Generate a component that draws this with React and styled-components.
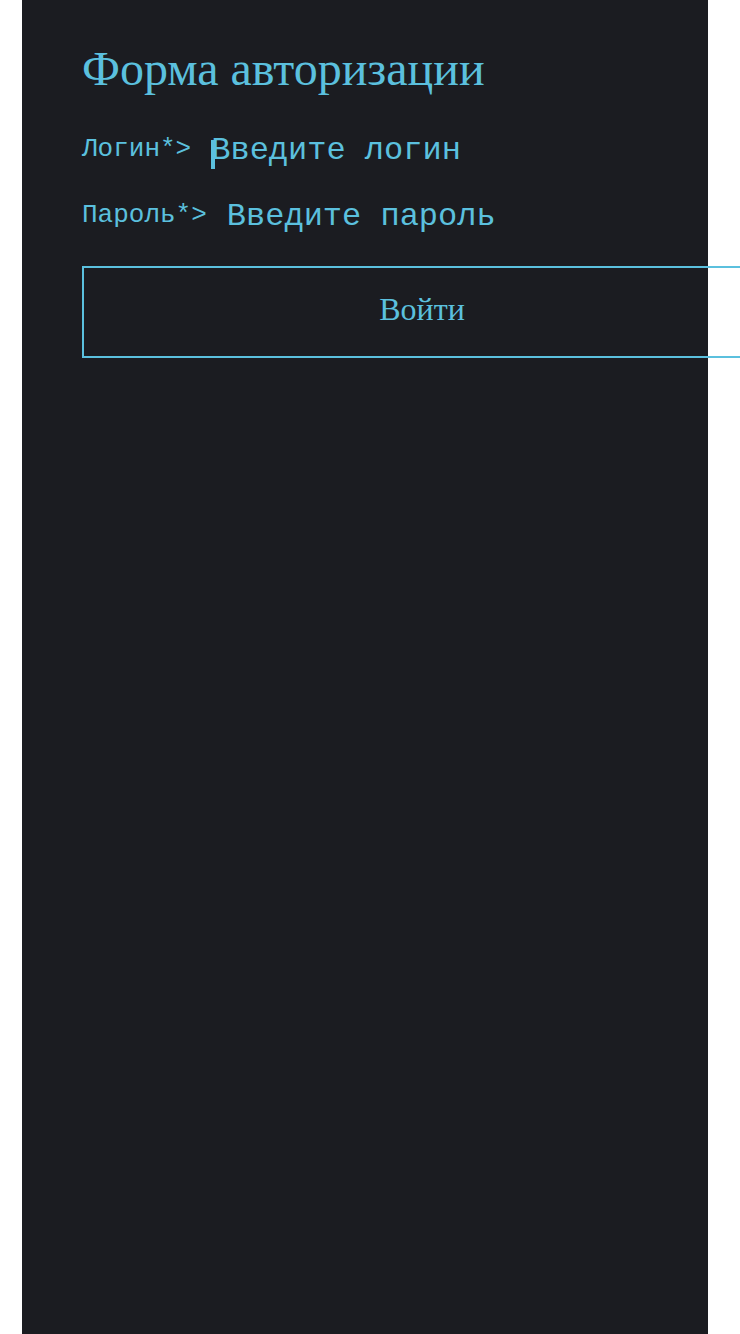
import React from "react";
import styled, { createGlobalStyle } from "styled-components";

const GlobalStyle = createGlobalStyle`
  html, body {
    margin: 0;
    padding: 0;
    background: #ffffff;
    overflow-x: hidden;
  }
  body {
    font-family: "Liberation Serif", serif;
  }
  * { box-sizing: border-box; }
`;

const ACCENT = "#5bc0de";

const Panel = styled.main`
  margin-left: 22px;
  width: 686px;
  min-height: 1334px;
  background: #1b1c21;
  padding: 41px 0 0 60px;
`;

const Title = styled.h1`
  margin: 0 0 37px 0;
  font-family: "Liberation Serif", "Times New Roman", serif;
  font-weight: 400;
  font-size: 48px;
  line-height: 55px;
  color: ${ACCENT};
`;

const Form = styled.form`
  display: flex;
  flex-direction: column;
  gap: 30px;
`;

const Row = styled.div`
  display: flex;
  align-items: flex-start;
`;

const Label = styled.label`
  font-family: "Liberation Mono", "Courier New", monospace;
  font-size: 26px;
  line-height: 29px;
  padding-top: 2px;
  margin-right: 20px;
  color: ${ACCENT};
  white-space: nowrap;
`;

const Field = styled.div`
  position: relative;
  flex: 1;
  display: flex;

  ${({ $focused }) =>
    $focused &&
    `
    &::before {
      content: "";
      position: absolute;
      left: 0;
      top: 7px;
      width: 4px;
      height: 29px;
      background: ${ACCENT};
    }
  `}
`;

const Input = styled.input`
  flex: 1;
  min-width: 0;
  height: 36px;
  padding: 0;
  margin: 0;
  border: none;
  outline: none;
  background: transparent;
  font-family: "Liberation Mono", "Courier New", monospace;
  font-size: 32px;
  line-height: 36px;
  color: ${ACCENT};
  caret-color: transparent;

  &::placeholder {
    color: ${ACCENT};
    opacity: 1;
  }
`;

const Submit = styled.button`
  width: 680px;
  height: 92px;
  margin: 1px 0 0 0;
  padding: 0 0 6px 0;
  border: 2px solid ${ACCENT};
  background: transparent;
  color: ${ACCENT};
  font-family: "Liberation Serif", "Times New Roman", serif;
  font-size: 32px;
  line-height: 36px;
  cursor: pointer;
`;

export default function App() {
  return (
    <>
      <GlobalStyle />
      <Panel>
        <Title>Форма авторизации</Title>
        <Form onSubmit={(e) => e.preventDefault()}>
          <Row>
            <Label htmlFor="login">Логин*&gt;</Label>
            <Field $focused>
              <Input id="login" type="text" placeholder="Введите логин" />
            </Field>
          </Row>
          <Row>
            <Label htmlFor="password">Пароль*&gt;</Label>
            <Field>
              <Input id="password" type="password" placeholder="Введите пароль" />
            </Field>
          </Row>
          <Submit type="submit">Войти</Submit>
        </Form>
      </Panel>
    </>
  );
}
